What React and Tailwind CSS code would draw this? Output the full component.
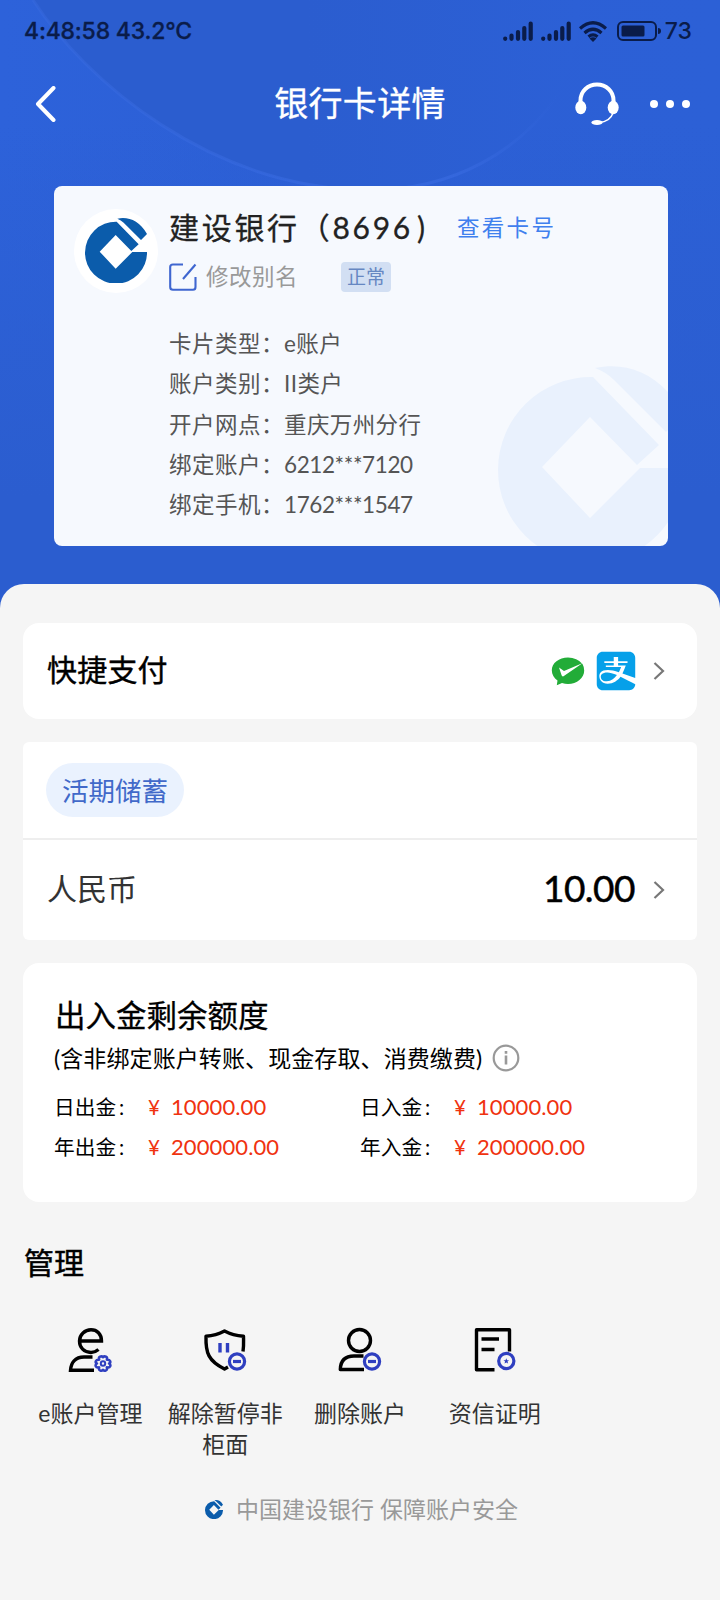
import React from "react";
import { FaAlipay } from "react-icons/fa";

const details = [
  { label: "卡片类型：", value: "e账户" },
  { label: "账户类别：", value: "II类户" },
  { label: "开户网点：", value: "重庆万州分行" },
  { label: "绑定账户：", value: "6212***7120", numeric: true },
  { label: "绑定手机：", value: "1762***1547", numeric: true },
];

const limits = [
  { label: "日出金", value: "10000.00" },
  { label: "日入金", value: "10000.00" },
  { label: "年出金", value: "200000.00" },
  { label: "年入金", value: "200000.00" },
];

const BankLogo = ({ className }) => (
  <svg viewBox="0 0 186 195" className={className} fill="currentColor">
    <path d="M186 102H142L92 152L44 101L92 51L139 99L161 79L95 11A93 93 0 1 0 186 102Z" />
    <path d="M97 2C130-5 163 8 186 48L168 66L116 14Q108 6 97 2Z" />
  </svg>
);

const HeaderBackdrop = () => (
  <svg
    viewBox="0 0 720 620"
    className="absolute inset-0 h-[620px] w-[720px]"
    fill="none"
  >
    <defs>
      <linearGradient id="base" x1="0" y1="0" x2="1" y2="0">
        <stop offset="0" stopColor="#2d62da" />
        <stop offset="0.45" stopColor="#2c5fd5" />
        <stop offset="1" stopColor="#2c60d6" />
      </linearGradient>
      <linearGradient id="fade" x1="0" y1="0" x2="0" y2="1">
        <stop offset="0.2" stopColor="#2b5dcf" stopOpacity="0" />
        <stop offset="0.8" stopColor="#2b5dcf" />
      </linearGradient>
      <linearGradient id="disc" x1="0" y1="0" x2="1" y2="0">
        <stop offset="0.5" stopColor="#2b5dcf" />
        <stop offset="1" stopColor="#2c60d6" />
      </linearGradient>
      <linearGradient id="rim" x1="0" y1="0" x2="1" y2="0">
        <stop offset="0" stopColor="#3a6ce2" stopOpacity="0.4" />
        <stop offset="0.8" stopColor="#3a6ce2" stopOpacity="0.6" />
        <stop offset="1" stopColor="#3a6ce2" stopOpacity="0" />
      </linearGradient>
    </defs>
    <rect width="720" height="620" fill="url(#base)" />
    <rect width="720" height="620" fill="url(#fade)" />
    <path
      d="M33 0C85 80 210 189 370 190C455 190 520 150 558 95C575 60 580 30 580 0Z"
      fill="url(#disc)"
    />
    <path
      d="M33 0C85 80 210 189 370 190C455 190 520 150 558 95"
      stroke="url(#rim)"
      strokeWidth="3"
    />
  </svg>
);

const Signal = () => (
  <svg viewBox="0 0 30 20" className="h-5 w-[30px]" stroke="currentColor" strokeWidth="4.200" strokeLinecap="round">
    <path d="M2.200 17.500v.3M8.500 14.500v3.300M15 11v6.800M21.300 7v10.800M27.700 2.500v15.300" />
  </svg>
);

const Wifi = () => (
  <svg viewBox="0 0 28 21" className="h-[21px] w-7" fill="none" stroke="currentColor" strokeWidth="3.200">
    <path d="M1 7.500Q14-4 27 7.500M5.500 12Q14 4.500 22.500 12M9.500 15.800Q14 12 18.500 15.800" />
    <path d="M14 21L10.500 17.500Q14 15 17.500 17.500Z" fill="currentColor" stroke="none" />
  </svg>
);

const Battery = () => (
  <svg viewBox="0 0 44 20" className="h-5 w-11" fill="none">
    <rect x="1" y="1" width="38" height="18" rx="5" stroke="currentColor" strokeWidth="2" />
    <rect x="4.500" y="4.500" width="23" height="11" rx="1.500" fill="currentColor" />
    <path d="M41 7Q44 7 44 10T41 13Z" fill="currentColor" />
  </svg>
);

const Headset = () => (
  <svg viewBox="0 0 44 44" className="h-11 w-11" fill="none" stroke="white">
    <path d="M5.500 21V18.500C5.500 9 13 2.500 22 2.500S38.500 9 38.500 18.500V21" strokeWidth="4" />
    <ellipse cx="5.800" cy="25.500" rx="5.500" ry="6.800" fill="white" stroke="none" />
    <ellipse cx="38.200" cy="25.500" rx="5.500" ry="6.800" fill="white" stroke="none" />
    <path d="M38 31C36 37 31 40 24 40.500" strokeWidth="1.500" />
    <ellipse cx="22" cy="40.500" rx="5.600" ry="2.600" fill="white" stroke="none" />
  </svg>
);

const WechatPay = () => (
  <svg viewBox="0 0 34 29" className="h-[29px] w-[34px]">
    <path
      d="M17 .5C8 .5 .8 6 .8 13.300C.8 17.500 3 21 6.500 23.500L5.800 28.200L11 26C13 26.700 15 27 17 27C26 27 33.200 21 33.200 13.500Q33.200 10 31.500 7Q26 .5 17 .5Z"
      fill="#22ac38"
    />
    <path d="M8 10.500L13 14L31.800 6L12.500 19.300Q11 19.800 10.500 18Z" fill="white" />
  </svg>
);

const Chevron = () => (
  <svg viewBox="0 0 12 20" className="h-5 w-3" fill="none" stroke="#777" strokeWidth="2.200">
    <path d="M1.500 2L10 10L1.500 18" />
  </svg>
);

const Edit = () => (
  <svg viewBox="0 0 28 28" className="h-7 w-7" fill="none" stroke="#3f66d0" strokeWidth="2.100">
    <path d="M14 1.500H4Q1.200 1.500 1.200 4V24Q1.200 26.800 4 26.800H24Q26.500 26.800 26.500 24V14" />
    <path d="M14 16L26.500 1.500" />
  </svg>
);

const MinusBadge = () => (
  <g stroke="#2f3fc0" strokeWidth="3.200">
    <circle cx="36" cy="35.500" r="7.600" />
    <path d="M32 35.500h8" />
  </g>
);

const AccountIcon = () => (
  <>
    <path d="M14 15H35.500C35.500 8 31 3.800 25 3.800S13.500 8.500 13.500 15S18 26.500 25 26.500Q29 26.500 32.500 23.500" />
    <path d="M26.500 31H18C9 31 5 37 4.500 44.300H28" />
    {/* six rounded lobes, one notch between each pair */}
    <g stroke="#2f3fc0">
      <path
        d="M37 31.200C38.500 29.500 42 30.800 40.800 33.700C44.500 33.300 45.500 37 43 37.500C45.500 39 44.500 42.300 40.800 41.300C42 44.500 38.500 45.800 37 43.800C35.500 45.800 32 44.500 33.200 41.300C29.500 42.300 28.500 39 31 37.500C28.500 37 29.500 33.300 33.200 33.700C32 30.800 35.500 29.500 37 31.200Z"
        strokeWidth="2.500"
        strokeLinejoin="round"
      />
      <circle cx="37" cy="37.500" r="2.200" strokeWidth="2" />
    </g>
  </>
);

const ShieldIcon = () => (
  <>
    <path d="M42 25.500C43 19 42.500 15 42.500 10.200Q32 9.500 23.500 5Q15 9.500 5 10.200C4.500 27 7.500 35 23.500 43L27 41" strokeLinejoin="round" />
    <path d="M19 17v9.500M26.500 17v9.500" stroke="#2f3fc0" />
    <MinusBadge />
  </>
);

const DeleteIcon = () => (
  <>
    <circle cx="23.500" cy="14.500" r="11" />
    <path d="M27.500 30H18C8 30 4.500 36 4.300 43.500H28" strokeLinejoin="round" />
    <MinusBadge />
  </>
);

const CertificateIcon = () => (
  <>
    <path d="M38.500 25.500V3.800H5.500V43.800H23.500M10.500 13H28M10.500 23.500H23.500" strokeLinejoin="round" />
    <circle cx="35.300" cy="35" r="7.600" stroke="#2f3fc0" strokeWidth="3.200" />
    <path
      d="M35.300 32.300l.8 1.900 2 .1-1.600 1.300.6 2-1.800-1.100-1.800 1.100.6-2-1.600-1.300 2-.1z"
      fill="#2f3fc0"
      stroke="none"
    />
  </>
);

const actions = [
  { label: "e账户管理", icon: <AccountIcon /> },
  { label: "解除暂停非柜面", icon: <ShieldIcon /> },
  { label: "删除账户", icon: <DeleteIcon /> },
  { label: "资信证明", icon: <CertificateIcon /> },
];

const App = () => {
  return (
    <div className="relative h-[1600px] w-[720px] overflow-hidden bg-[#f5f5f5] font-[Lato,'Noto_Sans_CJK_SC',sans-serif] text-black">
      <HeaderBackdrop />

      <div className="relative flex h-[584px] flex-col">
        <div className="flex h-[62px] items-center justify-between pr-7 pl-6 text-[#0a1c4a]">
          <span className="font-[Inter,sans-serif] text-[23px] font-medium tracking-[-0.200px] [-webkit-text-stroke:0.3px_#0a1c4a]">
            4:48:58 43.2°C
          </span>
          <div className="flex items-center">
            <Signal />
            <span className="w-2" />
            <Signal />
            <span className="w-2" />
            <Wifi />
            <span className="w-[10px]" />
            <Battery />
            <span className="ml-1 font-[Inter,sans-serif] text-[23px] font-medium">73</span>
          </div>
        </div>

        <header className="grid h-[84px] grid-cols-[1fr_auto_1fr] items-center pr-[30px] pl-[35px]">
          <svg viewBox="0 0 22 36" className="h-9 w-[22px]" fill="none" stroke="white" strokeWidth="4" strokeLinecap="round" strokeLinejoin="round">
            <path d="M18.500 2L3 18L18.500 34" />
          </svg>
          <h1 className="pr-[5px] pb-1 text-[34px] tracking-[0.300px] text-white [-webkit-text-stroke:0.3px_white]">
            银行卡详情
          </h1>
          <div className="flex items-center justify-end gap-[31px]">
            <Headset />
            <span className="flex gap-2">
              <span className="size-2 rounded-full bg-white" />
              <span className="size-2 rounded-full bg-white" />
              <span className="size-2 rounded-full bg-white" />
            </span>
          </div>
        </header>

        <section className="relative mt-10 ml-[54px] flex h-[360px] w-[614px] overflow-hidden rounded-lg bg-[#f6f9fe]">
          <BankLogo className="absolute top-[180px] left-[444px] h-[195px] w-[186px] text-[#e9f1fd]" />
          <div className="mt-[23px] ml-5 flex size-[84px] shrink-0 items-center justify-center rounded-full bg-white pb-[2px]">
            <BankLogo className="h-[65px] w-[62px] text-[#0b5cab]" />
          </div>
          <div className="relative ml-[11px] pt-[18px]">
            <div className="flex h-12 items-center pb-px">
              <h2 className="w-[288px] shrink-0 text-[30px] tracking-[2.700px] whitespace-nowrap text-[#222] [-webkit-text-stroke:0.3px_#222]">
                建设银行（8696<span className="ml-1">)</span>
              </h2>
              <span className="text-[22.500px] tracking-[2.300px] text-[#4080ee]">查看卡号</span>
            </div>
            <div className="mt-[10px] flex h-[30px] items-center">
              <Edit />
              <span className="ml-[9px] text-[22.500px] tracking-[0.500px] text-[#999]">修改别名</span>
              <span className="ml-[43px] flex h-[30px] w-[50px] items-center justify-center rounded bg-[#d2dff3] text-[19px] text-[#6687c2]">
                正常
              </span>
            </div>
            <dl className="mt-[32px] text-[22.500px] leading-[40.300px] text-[#555]">
              {details.map((item) => (
                <div key={item.label} className="flex">
                  <dt className="w-[115px] shrink-0 tracking-[0.500px]">{item.label}</dt>
                  <dd className={item.numeric ? "tracking-[-0.400px]" : "tracking-[0.400px]"}>{item.value}</dd>
                </div>
              ))}
            </dl>
          </div>
        </section>
      </div>

      <main className="relative flex h-[1016px] flex-col rounded-t-[24px] bg-[#f5f5f5] px-[23px] pt-[39px]">
        <section className="flex h-24 items-center justify-between rounded-2xl bg-white pr-8 pl-6">
          <h3 className="pb-[3px] text-[30px] tracking-[0.200px] [-webkit-text-stroke:0.4px_black]">快捷支付</h3>
          <div className="flex items-center">
            <WechatPay />
            <FaAlipay className="ml-[9px] size-[44px] text-[#06a0e9]" />
            <span className="w-[15px]" />
            <Chevron />
          </div>
        </section>

        <section className="mt-[23px] h-[198px] rounded-md bg-white">
          <div className="flex h-[98px] items-center border-b-2 border-[#eee] pl-[23px]">
            <span className="flex h-[54px] w-[138px] items-center justify-center rounded-full bg-[#eaf2fe] pt-1 text-[26.500px] text-[#4169c9]">
              活期储蓄
            </span>
          </div>
          <div className="flex h-[100px] items-center justify-between pr-8 pb-px pl-6">
            <span className="pb-[3px] text-[30px] text-[#333]">人民币</span>
            <div className="flex items-center gap-[18px]">
              <span className="pb-[3px] text-[37px] tracking-[-0.500px] [-webkit-text-stroke:0.5px_black]">10.00</span>
              <Chevron />
            </div>
          </div>
        </section>

        <section className="mt-[23px] h-[239px] rounded-2xl bg-white pt-[30px] pl-[31px]">
          <h3 className="pl-px text-[30.500px] leading-[44px] [-webkit-text-stroke:0.3px_black]">出入金剩余额度</h3>
          <div className="flex h-[42px] items-center text-[23px]">
            <span className="tracking-[0.100px]">(含非绑定账户转账、现金存取、消费缴费)</span>
            <svg viewBox="0 0 28 28" className="ml-[10px] size-7" fill="none" stroke="#999" strokeWidth="2.200">
              <circle cx="14" cy="14" r="12.300" />
              <path d="M14 11.500v9M14 7v2.800" strokeWidth="2.600" />
            </svg>
          </div>
          <div className="mt-2 grid grid-cols-[306px_1fr] text-[20.700px] leading-10">
            {limits.map((item) => (
              <div key={item.label} className="flex">
                <span className="w-[94px]">
                  {item.label}
                  <span className="ml-[3px]">:</span>
                </span>
                <span className="w-[23px] text-[#f0320f]">¥</span>
                <span className="text-[22px] tracking-[0.100px] text-[#f0320f]">{item.value}</span>
              </div>
            ))}
          </div>
        </section>

        <h3 className="mt-[37px] pl-px text-[30px] leading-[46px] [-webkit-text-stroke:0.5px_black]">管理</h3>
        <div className="mt-[41px] grid h-[136px] grid-cols-5">
          {actions.map((item) => (
            <div key={item.label} className="flex flex-col items-center">
              <svg viewBox="0 0 48 48" className="size-12" fill="none" stroke="black" strokeWidth="3.400">
                {item.icon}
              </svg>
              <p className="mt-6 w-[120px] text-center text-[23px] leading-[31px] text-[#333]">{item.label}</p>
            </div>
          ))}
        </div>

        <footer className="mt-[27px] flex h-10 items-center justify-center gap-[13px] pl-[3px] text-[23px] text-[#999]">
          <BankLogo className="h-[19px] w-[18px] text-[#0b5cab]" />
          <span>中国建设银行 保障账户安全</span>
        </footer>
      </main>
    </div>
  );
};

export default App;
